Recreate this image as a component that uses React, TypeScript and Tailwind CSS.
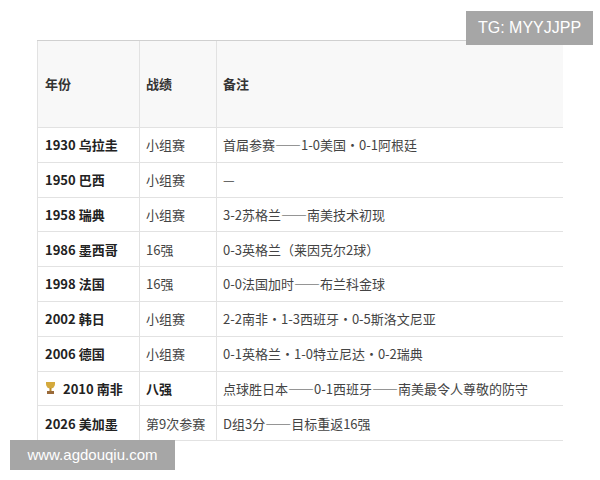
const rows: [string, string, string, boolean?][] = [
  ["1930 乌拉圭", "小组赛", "首届参赛——1-0美国·0-1阿根廷"],
  ["1950 巴西", "小组赛", "—"],
  ["1958 瑞典", "小组赛", "3-2苏格兰——南美技术初现"],
  ["1986 墨西哥", "16强", "0-3英格兰（莱因克尔2球）"],
  ["1998 法国", "16强", "0-0法国加时——布兰科金球"],
  ["2002 韩日", "小组赛", "2-2南非·1-3西班牙·0-5斯洛文尼亚"],
  ["2006 德国", "小组赛", "0-1英格兰·1-0特立尼达·0-2瑞典"],
  ["2010 南非", "八强", "点球胜日本——0-1西班牙——南美最令人尊敬的防守", true],
  ["2026 美加墨", "第9次参赛", "D组3分——目标重返16强"],
];
export default function App() {
  return (
    <div lang="zh-CN" className="w-[600px] h-[480px] bg-white relative overflow-hidden text-[#333]" style={{ fontFamily: '"Noto Sans CJK SC", "Liberation Sans", sans-serif' }}>
      <div className="absolute left-[466px] top-[11px] w-[127px] h-[34px] bg-[#a6a6a6] text-white text-[16px] flex items-center justify-center" style={{ fontFamily: '"Liberation Sans", sans-serif' }}>TG: MYYJJPP</div>
      <div className="pt-[40px] pl-[37px]">
        <div className="w-[526px] border-t border-[#d0d0d0]">
          <div className="grid grid-cols-[103px_77px_346px] h-[87px] bg-[#f8f8f8] border-b border-[#e2e2e2] text-[13px] font-bold">
            <div className="border-x border-[#e2e2e2] flex items-center pl-[7px]">年份</div>
            <div className="border-r border-[#e2e2e2] flex items-center pl-[6px]">战绩</div>
            <div className="flex items-center pl-[6px]">备注</div>
          </div>
          {rows.map((r, i) => (
            <div key={i} className="grid grid-cols-[103px_77px_346px] h-[34.8px] border-b border-[#e2e2e2] text-[13px]">
              <div className="border-x border-[#e2e2e2] flex items-center pl-[7px] font-bold text-[#222] whitespace-nowrap">
                {r[3] && (
                  <svg width="11" height="14" viewBox="0 0 11 14" className="mr-[7px]">
                    <path d="M1 1h9v2a4.5 4.5 0 0 1-9 0z" fill="#d4a93c" />
                    <rect x="4.5" y="7" width="2" height="3" fill="#b98b2a" />
                    <rect x="2" y="10" width="7" height="3" fill="#9a6a3a" />
                  </svg>
                )}
                {r[0]}
              </div>
              <div className={`border-r border-[#e2e2e2] flex items-center pl-[6px] whitespace-nowrap ${r[3] ? "font-bold text-[#222]" : "text-[#444]"}`}>{r[1]}</div>
              <div className="flex items-center pl-[6px] whitespace-nowrap text-[#444]">{r[2]}</div>
            </div>
          ))}
        </div>
      </div>
      <div className="absolute left-[10px] top-[440px] w-[165px] h-[30px] bg-[#a6a6a6] text-white text-[15px] flex items-center justify-center" style={{ fontFamily: '"Liberation Sans", sans-serif' }}>www.agdouqiu.com</div>
    </div>
  );
}
